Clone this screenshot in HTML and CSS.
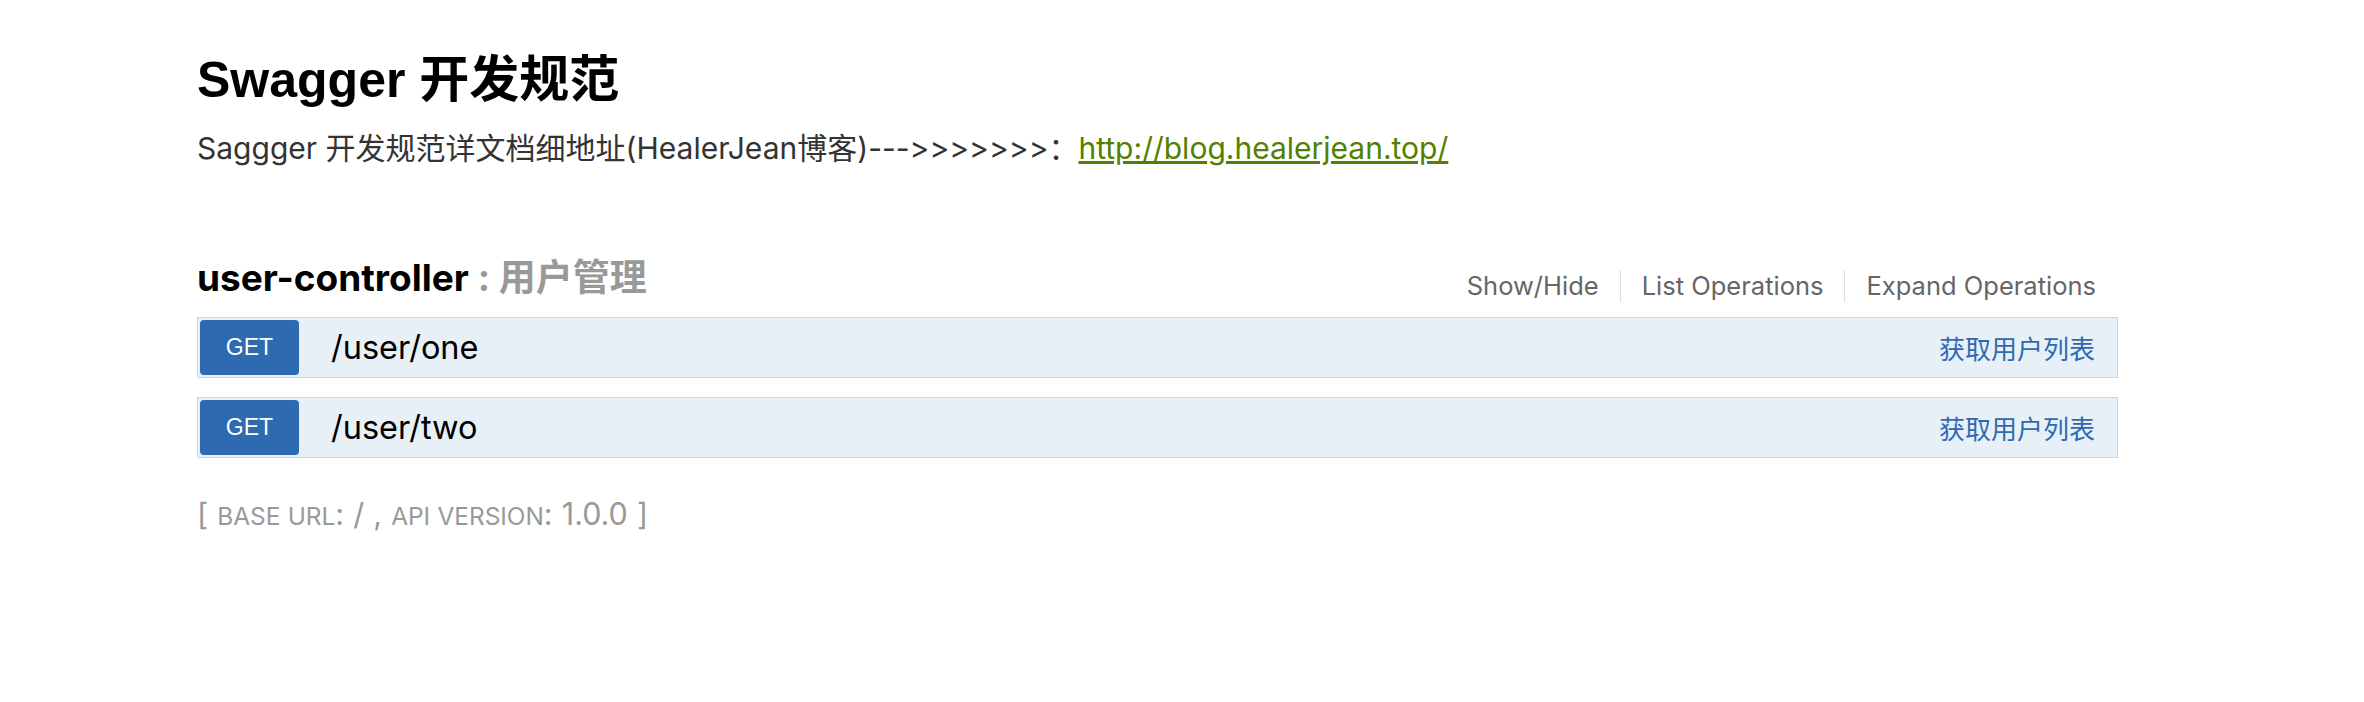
FILE: index.html
```html
<!DOCTYPE html>
<html lang="zh-CN">
<head>
<meta charset="utf-8">
<title>Swagger 开发规范</title>
<link rel="stylesheet" href="styles.css">
</head>
<body>
<div class="wrap">
  <div class="info">
    <h1 class="info-title">Swagger 开发规范</h1>
    <div class="info-desc">Saggger 开发规范详文档细地址(HealerJean博客)--->>>>>>>：<a href="#" class="blog-link">http://blog.healerjean.top/</a></div>
  </div>

  <div class="resource">
    <div class="res-heading">
      <h2 class="res-title">user-controller<span class="res-desc"> : 用户管理</span></h2>
      <ul class="options">
        <li class="opt">Show/Hide</li>
        <li class="opt">List Operations</li>
        <li class="opt last">Expand Operations</li>
      </ul>
    </div>
    <ul class="operations">
      <li class="op">
        <span class="method">GET</span>
        <span class="path">/user/one</span>
        <span class="summary">获取用户列表</span>
      </li>
      <li class="op">
        <span class="method">GET</span>
        <span class="path">/user/two</span>
        <span class="summary">获取用户列表</span>
      </li>
    </ul>
  </div>

  <div class="footer">[ <span class="sc">base url</span>: / , <span class="sc">api version</span>: 1.0.0 ]</div>
</div>
</body>
</html>
```

FILE: styles.css
```css
html, body {
  margin: 0;
  padding: 0;
  background: #ffffff;
}

body {
  font-family: "Inter", "Noto Sans CJK SC", sans-serif;
  font-feature-settings: "calt" 0, "liga" 0;
  font-variant-ligatures: none;
  color: #333333;
}

.wrap {
  margin-left: 197px;
  width: 1921px;
  padding-top: 50px;
}

.info-title {
  margin: 0;
  font-family: "Liberation Sans", "Noto Sans CJK SC", sans-serif;
  font-weight: bold;
  font-size: 50px;
  line-height: 60px;
  color: #000000;
}

.info-desc {
  margin-top: 18px;
  font-size: 30px;
  line-height: 40px;
  color: #333333;
}

.blog-link {
  color: #547f00;
  text-decoration: underline;
}

.resource {
  margin-top: 88px;
}

.res-heading {
  display: flex;
  justify-content: space-between;
  align-items: flex-start;
}

.res-title {
  margin: 0;
  font-size: 37px;
  line-height: 44px;
  font-weight: bold;
  color: #000000;
}

.res-desc {
  color: #999999;
}

.options {
  list-style: none;
  margin: 14px 22px 0 0;
  padding: 0;
  display: flex;
}

.opt {
  font-size: 25.5px;
  line-height: 32px;
  color: #666666;
  padding: 0 21px;
  border-right: 1px solid #dddddd;
}

.opt.last {
  border-right: none;
  padding-right: 0;
}

.operations {
  list-style: none;
  margin: 15px 0 0 0;
  padding: 0;
}

.op {
  display: flex;
  align-items: center;
  background: #e7f0f7;
  border: 1px solid #c3d9ec;
  padding: 2px 22px 2px 2px;
  margin-bottom: 19px;
}

.method {
  width: 99px;
  height: 55px;
  display: flex;
  align-items: center;
  justify-content: center;
  background: #2e6ab1;
  border-radius: 4px;
  color: #ffffff;
  font-family: "Liberation Sans", sans-serif;
  font-size: 23px;
}

.path {
  padding-left: 32px;
  font-size: 32.5px;
  color: #000000;
  flex: 1;
}

.summary {
  font-size: 26px;
  color: #2e6ab1;
}

.footer {
  margin-top: 38px;
  font-size: 30.5px;
  line-height: 36px;
  word-spacing: 0.5px;
  color: #999999;
}

.sc {
  text-transform: uppercase;
  font-size: 0.8em;
}
```
